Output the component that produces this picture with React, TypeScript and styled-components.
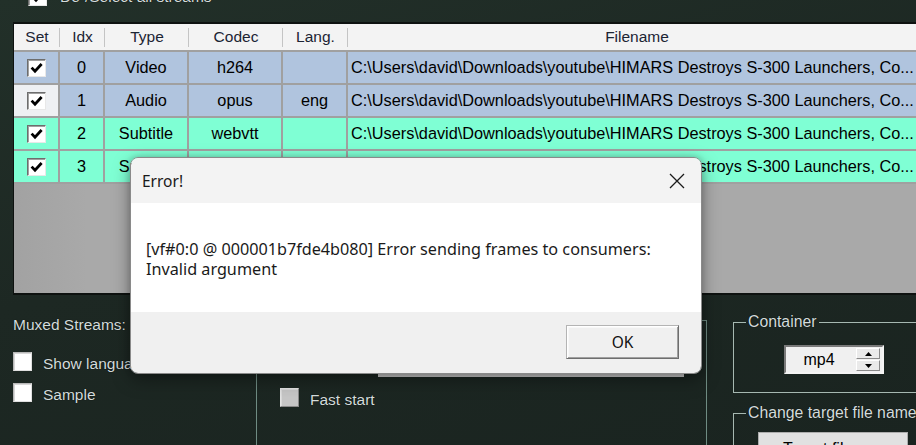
import React from "react";
import styled, { createGlobalStyle } from "styled-components";

const GlobalStyle = createGlobalStyle`
  html, body { margin: 0; padding: 0; background: #1d2824; overflow: hidden; }
  #root { width: 916px; height: 445px; }
`;

const Page = styled.div`
  position: relative;
  width: 916px;
  height: 445px;
  overflow: hidden;
  background: linear-gradient(165deg, #223029 0%, #1d2823 45%, #1a2420 100%);
  font-family: "Liberation Sans", Arial, sans-serif;
  font-size: 15.5px;
  color: #d4dcdc;
  display: flex;
  flex-direction: column;
`;

const TopRow = styled.div`
  display: flex;
  align-items: center;
  gap: 13px;
  height: 18px;
  margin-top: -12px;
  padding-left: 28px;
  flex: none;
`;

const Label = styled.span`
  line-height: 18px;
  white-space: nowrap;
  color: #d4dcdc;
  text-shadow: 0 0 1px #000;
`;

const CheckLabel = styled(Label)`
  padding-top: 4px;
`;

const Box = styled.span<{ $variant: "table" | "dark" | "disabled" }>`
  box-sizing: border-box;
  flex: none;
  width: 19px;
  height: ${(p) => (p.$variant === "table" ? "18px" : "19px")};
  display: inline-flex;
  align-items: center;
  justify-content: center;
  background: ${(p) => (p.$variant === "disabled" ? "#c6c6c6" : "#ffffff")};
  border: 1px solid;
  border-color: ${(p) =>
    p.$variant === "table"
      ? "#6d6d6d #e8e8e8 #e8e8e8 #6d6d6d"
      : p.$variant === "disabled"
      ? "#e4e4e4 #8a8a8a #8a8a8a #e4e4e4"
      : "#b8b8b8 #e0e0e0 #e0e0e0 #b8b8b8"};
  box-shadow: ${(p) =>
    p.$variant === "table" ? "inset 1px 1px 0 #a0a0a0" : "inset 1px 1px 0 #d8d8d8"};
`;

const CheckMark = () => (
  <svg width="13" height="12" viewBox="0 0 13 12">
    <path d="M1.6 5.6 L5 9.2 L11.6 2" fill="none" stroke="#000" strokeWidth="2.8" />
  </svg>
);

const CheckBox = ({ checked, variant }: { checked?: boolean; variant: "table" | "dark" | "disabled" }) => (
  <Box $variant={variant}>{checked && <CheckMark />}</Box>
);

/* ---------- stream table ---------- */

const Table = styled.div`
  box-sizing: border-box;
  margin: 16px 0 0 13px;
  width: 913px;
  height: 273px;
  flex: none;
  display: flex;
  flex-direction: column;
  background: linear-gradient(90deg, #a2a2a2 0%, #a9a9a9 8%, #a9a9a9 100%);
  border-top: 2px solid #0e1210;
  border-left: 1px solid #0e1210;
  border-bottom: 2px solid #0e1210;
  color: #000;
`;

const cols = "46px 45px 84px 94px 65px 1fr";

const Header = styled.div`
  display: grid;
  grid-template-columns: ${cols};
  height: 26px;
  background: #f3f3f3;
  flex: none;
`;

const HeaderCell = styled.div`
  position: relative;
  display: flex;
  align-items: center;
  justify-content: center;
  color: #1c2433;
  line-height: 18px;
  &::after {
    content: "";
    position: absolute;
    right: 0;
    top: 4px;
    bottom: 3px;
    width: 1px;
    background: #c4c4c4;
  }
`;

const Row = styled.div<{ $bg: string }>`
  display: grid;
  grid-template-columns: ${cols};
  height: 33px;
  box-sizing: border-box;
  background: ${(p) => p.$bg};
  border-top: 2px solid #a0a0a0;
  flex: none;
  font-size: 16.3px;
`;

const Cell = styled.div<{ $left?: boolean; $light?: boolean }>`
  box-sizing: border-box;
  display: flex;
  align-items: center;
  justify-content: ${(p) => (p.$left ? "flex-start" : "center")};
  padding-left: ${(p) => (p.$left ? "3px" : "0")};
  border-right: 2px solid #a0a0a0;
  white-space: nowrap;
  overflow: hidden;
  background: ${(p) => (p.$light ? "#eef0f3" : "transparent")};
`;

const Filler = styled.div`
  flex: 1;
  border-top: 2px solid #a0a0a0;
`;

/* ---------- bottom controls ---------- */

const Bottom = styled.div`
  display: flex;
  flex: 1;
  min-height: 0;
  padding-left: 13px;
`;

const LeftPanel = styled.div`
  width: 243px;
  flex: none;
  display: flex;
  flex-direction: column;
  padding-top: 21px;
`;

const CheckRow = styled.div<{ $mt: number; $indent?: number }>`
  display: flex;
  align-items: center;
  gap: 11px;
  margin-top: ${(p) => p.$mt}px;
  padding-left: ${(p) => p.$indent ?? 0}px;
  height: 19px;
`;

const MidGroup = styled.div`
  box-sizing: border-box;
  width: 451px;
  height: 160px;
  margin-top: 25px;
  flex: none;
  border: 1px solid #6f8c83;
  display: flex;
  flex-direction: column;
`;

const Field = styled.div`
  margin: 31px 0 0 121px;
  width: 306px;
  height: 25px;
  box-sizing: border-box;
  background: #e4e4e4;
  border-bottom: 3px solid #c8c8c8;
`;

const RightPanel = styled.div`
  margin: 18px 0 0 26px;
  width: 210px;
  flex: none;
  display: flex;
  flex-direction: column;
`;

const Group = styled.fieldset<{ $mt: number }>`
  margin: ${(p) => p.$mt}px 0 0 0;
  padding: 0;
  border: 1px solid #a6b8b1;
  min-inline-size: 0;
`;

const Legend = styled.legend`
  margin-left: 12px;
  padding: 0 2px;
  line-height: 18px;
  color: #d4dcdc;
  text-shadow: 0 0 1px #000;
  white-space: nowrap;
  font-size: 15.8px;
`;

const Spinner = styled.div`
  box-sizing: border-box;
  margin: 14px 0 18px 50px;
  width: 100px;
  height: 29px;
  display: flex;
  align-items: stretch;
  background: #f0f0f0;
  border: 2px solid;
  border-color: #7a7a7a #f4f4f4 #f4f4f4 #7a7a7a;
  color: #000;
  font-size: 16px;
`;

const SpinValue = styled.div`
  flex: 1;
  display: flex;
  align-items: center;
  justify-content: center;
  padding-right: 4px;
`;

const SpinButtons = styled.div`
  width: 24px;
  display: flex;
  flex-direction: column;
  padding: 1px 2px 1px 0;
  gap: 1px;
`;

const SpinBtn = styled.div`
  flex: 1;
  display: flex;
  align-items: center;
  justify-content: center;
  background: #eaeaea;
  border: 1px solid;
  border-color: #ffffff #8a8a8a #8a8a8a #ffffff;
`;

const TargetButton = styled.div`
  box-sizing: border-box;
  margin: 10px 0 0 24px;
  width: 150px;
  height: 30px;
  background: #e1e1e1;
  border: 1px solid #adadad;
  color: #000;
  padding: 7px 0 0 24px;
  white-space: nowrap;
  font-size: 16px;
`;

/* ---------- dialog ---------- */

const Dialog = styled.div`
  position: absolute;
  left: 130px;
  top: 157px;
  width: 572px;
  height: 217px;
  box-sizing: border-box;
  border: 1px solid #8a8a8a;
  border-radius: 8px;
  overflow: hidden;
  display: flex;
  flex-direction: column;
  box-shadow: 0 6px 18px rgba(0, 0, 0, 0.35), 0 0 6px rgba(0, 0, 0, 0.2);
  font-family: "Noto Sans", "Open Sans", sans-serif;
  color: #1a1a1a;
`;

const TitleBar = styled.div`
  height: 45px;
  flex: none;
  background: #f3f3f3;
  display: flex;
  align-items: center;
  justify-content: space-between;
  padding: 0 16px 0 11px;
  font-size: 15.5px;
`;

const Body = styled.div`
  height: 109px;
  flex: none;
  background: #ffffff;
  padding: 36px 0 0 15px;
  box-sizing: border-box;
  font-size: 16.2px;
  line-height: 20px;
`;

const Footer = styled.div`
  flex: 1;
  background: #f0f0f0;
  display: flex;
  justify-content: flex-end;
  align-items: flex-start;
  padding: 13px 22px 0 0;
`;

const OkButton = styled.div`
  box-sizing: border-box;
  width: 113px;
  height: 34px;
  display: flex;
  align-items: center;
  justify-content: center;
  background: #f0f0f0;
  border: 1px solid;
  border-color: #b4b4b4 #6e6e6e #6e6e6e #b4b4b4;
  box-shadow: inset 1px 1px 0 #ffffff, inset -1px -1px 0 #a0a0a0, inset 2px 2px 0 #f8f8f8;
  font-size: 15.5px;
  color: #111;
`;

const rows = [
  { idx: 0, type: "Video", codec: "h264", lang: "", bg: "#b0c4de", light: false },
  { idx: 1, type: "Audio", codec: "opus", lang: "eng", bg: "#b0c4de", light: true },
  { idx: 2, type: "Subtitle", codec: "webvtt", lang: "", bg: "#7fffd4", light: false },
  { idx: 3, type: "Subtitle", codec: "webvtt", lang: "", bg: "#7fffd4", light: false },
];

const path = "C:\\Users\\david\\Downloads\\youtube\\HIMARS Destroys S-300 Launchers, Co...";

export default function App() {
  return (
    <Page>
      <GlobalStyle />
      <TopRow>
        <CheckBox checked variant="table" />
        <Label>De-/Select all streams</Label>
      </TopRow>

      <Table>
        <Header>
          {["Set", "Idx", "Type", "Codec", "Lang.", "Filename"].map((h) => (
            <HeaderCell key={h}>{h}</HeaderCell>
          ))}
        </Header>
        {rows.map((r) => (
          <Row key={r.idx} $bg={r.bg}>
            <Cell $light={r.light}>
              <CheckBox checked variant="table" />
            </Cell>
            <Cell>{r.idx}</Cell>
            <Cell>{r.type}</Cell>
            <Cell>{r.codec}</Cell>
            <Cell>{r.lang}</Cell>
            <Cell $left>{path}</Cell>
          </Row>
        ))}
        <Filler />
      </Table>

      <Bottom>
        <LeftPanel>
          <Label>Muxed Streams:</Label>
          <CheckRow $mt={18}>
            <CheckBox variant="dark" />
            <CheckLabel>Show language</CheckLabel>
          </CheckRow>
          <CheckRow $mt={12}>
            <CheckBox variant="dark" />
            <CheckLabel>Sample</CheckLabel>
          </CheckRow>
        </LeftPanel>

        <MidGroup>
          <Field />
          <CheckRow $mt={11} $indent={23}>
            <CheckBox variant="disabled" />
            <CheckLabel>Fast start</CheckLabel>
          </CheckRow>
        </MidGroup>

        <RightPanel>
          <Group $mt={0}>
            <Legend>Container</Legend>
            <Spinner>
              <SpinValue>mp4</SpinValue>
              <SpinButtons>
                <SpinBtn>
                  <svg width="7" height="4" viewBox="0 0 7 4"><path d="M3.5 0 L7 4 L0 4 Z" fill="#000" /></svg>
                </SpinBtn>
                <SpinBtn>
                  <svg width="7" height="4" viewBox="0 0 7 4"><path d="M0 0 L7 0 L3.5 4 Z" fill="#000" /></svg>
                </SpinBtn>
              </SpinButtons>
            </Spinner>
          </Group>
          <Group $mt={11}>
            <Legend>Change target file name</Legend>
            <TargetButton>Target file...</TargetButton>
          </Group>
        </RightPanel>
      </Bottom>

      <Dialog>
        <TitleBar>
          <span>Error!</span>
          <svg width="16" height="16" viewBox="0 0 16 16">
            <path d="M1 1 L15 15 M15 1 L1 15" stroke="#1a1a1a" strokeWidth="1.3" fill="none" />
          </svg>
        </TitleBar>
        <Body>
          [vf#0:0 @ 000001b7fde4b080] Error sending frames to consumers:
          <br />
          Invalid argument
        </Body>
        <Footer>
          <OkButton>OK</OkButton>
        </Footer>
      </Dialog>
    </Page>
  );
}
